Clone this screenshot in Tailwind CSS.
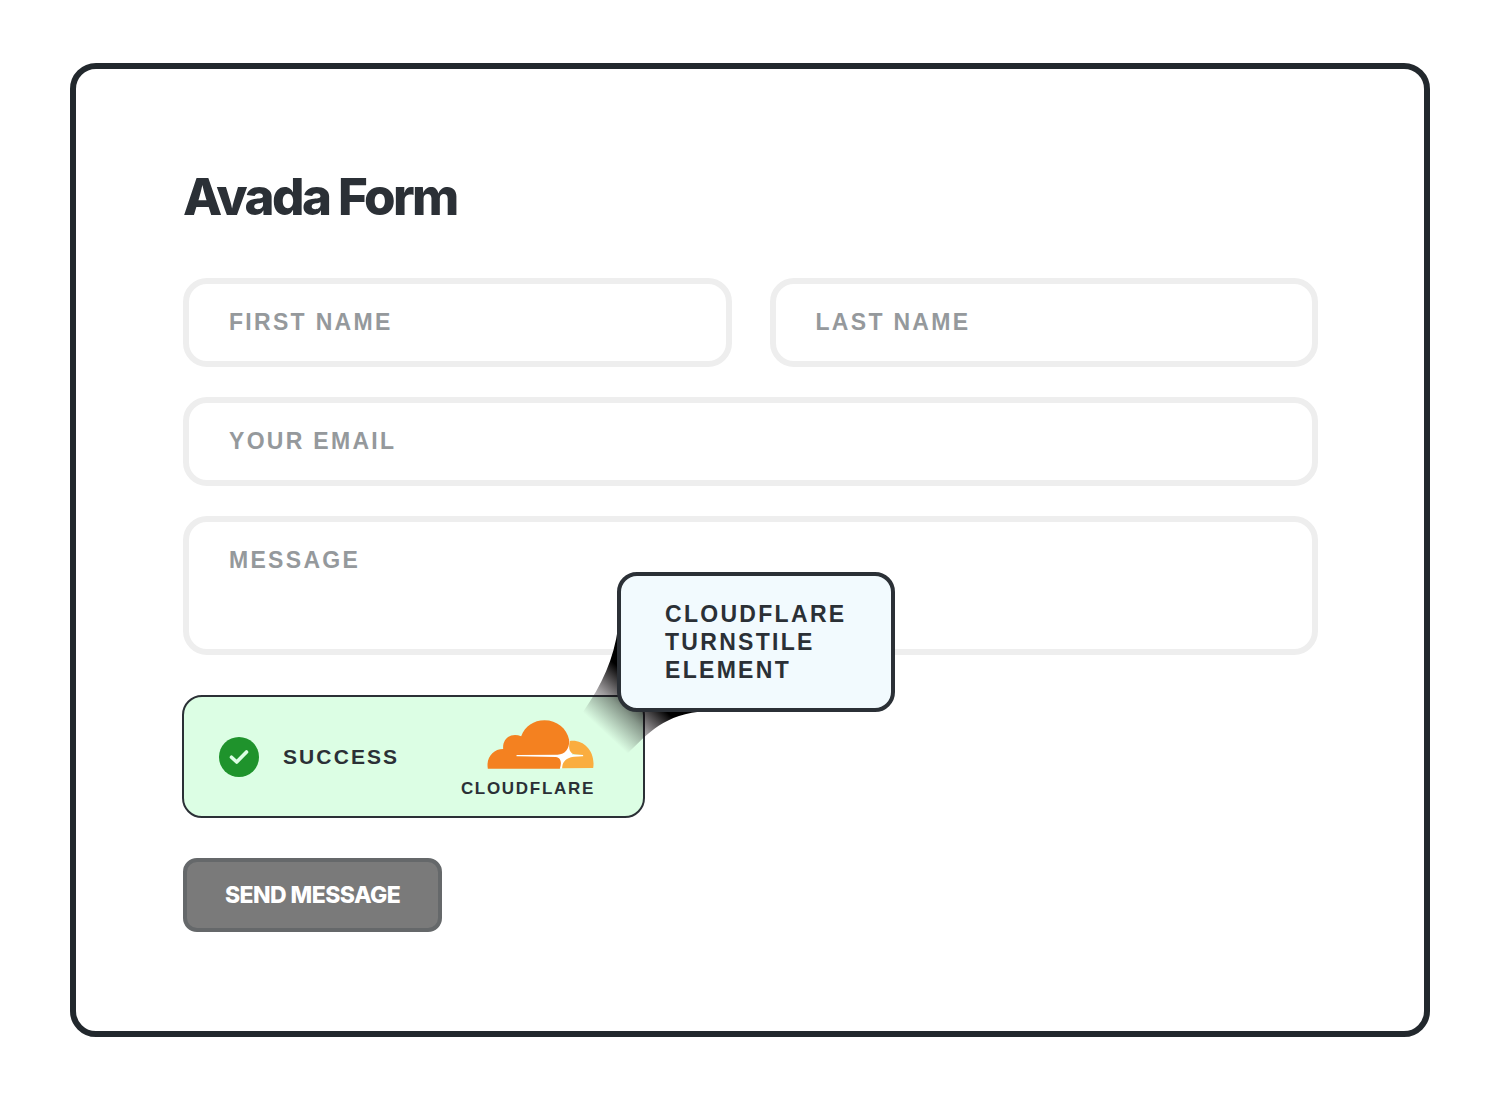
<html>

<head>
    <meta charset="utf-8">
    <script src="https://cdn.jsdelivr.net/npm/@tailwindcss/browser@4"></script>
    <title>Avada Form</title>
</head>

<body class="bg-white font-['Liberation_Sans',sans-serif] text-[#2b3036]">
    <main class="mx-[70px] my-[63px] rounded-[26px] border-6 border-[#22282d] pt-24 pr-[106px] pb-[99px] pl-[107px]">
        <h1 class="mb-[50px] font-['Inter',sans-serif] text-[51px] leading-[63px] font-extrabold tracking-tighter">Avada Form</h1>

        <form onsubmit="return false">
            <!-- fields -->
            <div class="grid grid-cols-2 gap-x-[38px] gap-y-[30px]">
                <input type="text" aria-label="First name" placeholder="FIRST NAME"
                    class="h-[89px] w-full rounded-3xl border-6 border-[#eeeeee] px-10 text-[23px] font-bold tracking-widest placeholder:text-[#95999c] focus:outline-none">
                <input type="text" aria-label="Last name" placeholder="LAST NAME"
                    class="h-[89px] w-full rounded-3xl border-6 border-[#eeeeee] px-10 text-[23px] font-bold tracking-widest placeholder:text-[#95999c] focus:outline-none">
                <input type="email" aria-label="Your email" placeholder="YOUR EMAIL"
                    class="col-span-2 h-[89px] w-full rounded-3xl border-6 border-[#eeeeee] px-10 text-[23px] font-bold tracking-widest placeholder:text-[#95999c] focus:outline-none">
                <textarea aria-label="Message" placeholder="MESSAGE"
                    class="col-span-2 block h-[139px] w-full resize-none rounded-3xl border-6 border-[#eeeeee] px-10 pt-6 text-[23px] leading-7 font-bold tracking-widest placeholder:text-[#95999c] focus:outline-none"></textarea>
            </div>

            <!-- turnstile -->
            <div class="relative mt-10 -ml-px flex h-[123px] w-[463px] items-center justify-between rounded-[20px] border-2 border-[#2b3036] bg-[#dcfee4] pr-12 pl-[35px]">
                <div class="flex items-center gap-6">
                    <svg class="size-10" viewBox="0 0 40 40" fill="none">
                        <circle cx="20" cy="20" r="20" fill="#1f932c" />
                        <path d="M12.5 20.2L17.7 25L27.5 15" stroke="#dcfee4" stroke-width="3.6" stroke-linecap="round" stroke-linejoin="round" />
                    </svg>
                    <span class="text-[21px] font-bold tracking-widest">SUCCESS</span>
                </div>
                <div class="flex flex-col items-end pt-2">
                    <svg class="h-[49px] w-[108px]" viewBox="141 61 323 147">
                        <!-- star shows through the gap between both clouds -->
                        <path fill="#fff" d="M387 122H390L396 166L429 166V170L385 178L366 206H359L355 175L229 170V165L355 164Z" />
                        <path fill="#f48120" d="M143 207C137 174 159 148 189 148C186 116 214 97 243 110C254 80 281 62 313 62C350 62 380 86 387 121C389 141 378 165 352 165L229 166V170L347 172C363 174 365 190 359 207Z" />
                        <path fill="#faad3f" d="M389 124C430 118 467 155 459 205L366 206C366 185 380 173 402 171L429 170V166L404 164C387 161 384 143 389 124Z" />
                    </svg>
                    <span class="mt-2 text-[17px] leading-6 font-bold tracking-widest">CLOUDFLARE</span>
                </div>

                <!-- callout -->
                <svg class="absolute -top-[77px] left-[391px] size-[140px]" viewBox="0 0 140 140">
                    <defs>
                        <linearGradient id="tail" gradientUnits="userSpaceOnUse" x1="67" y1="69" x2="28" y2="111">
                            <stop offset="0" stop-color="#000" />
                            <stop offset=".5" stop-color="#100a0e" stop-opacity=".42" />
                            <stop offset="1" stop-color="#231820" stop-opacity="0" />
                        </linearGradient>
                    </defs>
                    <path fill="url(#tail)" d="M43 8C39 38 27 65 8 92L0 104L42 143L52 134C74 113 88 94 132 91V8Z" />
                </svg>
                <div class="absolute -top-[125px] left-[433px] w-[278px] rounded-[20px] border-4 border-[#2b3036] bg-[#f2fafe] px-11 py-6 text-[23px] leading-7 font-bold tracking-widest">
                    CLOUDFLARE<br>TURNSTILE<br>ELEMENT
                </div>
            </div>

            <button type="submit"
                class="mt-10 h-[74px] rounded-[14px] border-4 border-[#65686a] bg-[#7a7a7a] px-[38px] font-['Inter',sans-serif] text-[23px] font-extrabold tracking-tight text-white">SEND MESSAGE</button>
        </form>
    </main>
</body>

</html>
